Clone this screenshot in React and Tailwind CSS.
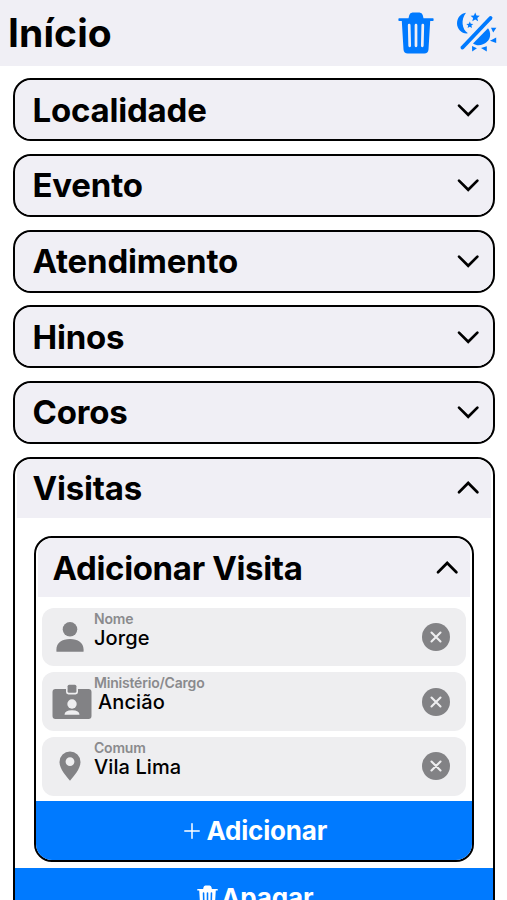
import React from 'react';

const SECTIONS = ['Localidade', 'Evento', 'Atendimento', 'Hinos', 'Coros'];

function TrashIcon({ className }) {
  return (
    <svg viewBox="0 0 36 42" className={className} fill="none">
      <path
        fill="currentColor"
        d="M10.500 6.300L11.300 3Q12 .4 14.500.4h7Q24 .4 24.700 3l.8 3.300H35q.6 0 .6 1v.8q0 1-.6 1h-2.800l-1.700 28.400q-.3 4-4.300 4H9.800q-4 0-4.300-4L3.800 9.100H1q-.6 0-.6-1v-.8q0-1 .6-1z"
      />
      <path stroke="var(--slit)" strokeWidth="2.700" strokeLinecap="round" d="M11.200 13.200l.5 20.600M18 13.200v20.600M24.800 13.200l-.5 20.600" />
    </svg>
  );
}

function ThemeIcon({ className }) {
  return (
    <svg viewBox="0 0 40 42" className={className} fill="currentColor">
      <path d="M9 .8C3 1.500 0 6.500 0 11.500c0 6 5.500 10.800 11 9.800C4.800 17.500 3.600 7.500 9 .8z" />
      <path d="M18.200.5l1.300 3 3.300.3-2.500 2.200.8 3.300-2.900-1.700-2.900 1.700.8-3.300-2.500-2.200 3.300-.3zM12.800 9.400l1 2.300 2.500.2-1.900 1.700.6 2.500-2.200-1.300-2.200 1.300.6-2.500-1.900-1.700 2.500-.2z" />
      <path d="M5.500 35.500L33.500 6" stroke="currentColor" strokeWidth="3.900" strokeLinecap="round" />
      <path d="M31 16.200C34 20 34 26 30 29.800S20 34.500 16 31.500z" />
      <path d="M34 15.700h5.400l-3.200 4.900zM33 28.700l6.200-3.200v5.400zM24 36l5.800-1.700v5.200zM15 34l4.900 2.300-4.700 3.100z" />
    </svg>
  );
}

function Chevron({ up }) {
  return (
    <svg viewBox="0 0 24 16" className="w-6 h-4" fill="none" stroke="black" strokeWidth="2.700" strokeLinecap="round" strokeLinejoin="miter">
      <path d={up ? 'M3 12.200L12.200 3l9.200 9.200' : 'M3 3.600l9.200 9.200 9.200-9.200'} />
    </svg>
  );
}

function PersonIcon() {
  return (
    <svg viewBox="0 0 28 32" className="w-7 h-8 ml-[14px]" fill="#828285">
      <circle cx="14" cy="8.300" r="7.300" />
      <path d="M.4 30.200v-1.700C.4 22 6 18 14 18s13.600 4 13.600 10.500v1.700q0 .6-.6.6H1q-.6 0-.6-.6z" />
    </svg>
  );
}

function BadgeIcon() {
  return (
    <svg viewBox="0 0 40 36" className="w-10 h-9 ml-[10px]" fill="#828285">
      <path d="M3.500 5H14V8q0 2.400 2.400 2.400h7.200Q26 10.400 26 8V5h10.500q3 0 3 3v24q0 3-3 3h-33q-3 0-3-3V8q0-3 3-3z" />
      <rect x="15.600" y=".8" width="8.800" height="8" rx="1.500" />
      <g fill="#eeeef0">
        <circle cx="20" cy="20" r="4.700" />
        <path d="M12.500 30.700q0-4.500 7.500-4.500t7.500 4.500z" />
      </g>
    </svg>
  );
}

function PinIcon() {
  return (
    <svg viewBox="0 0 22 30" className="w-[22px] h-[30px] ml-[17px]" fill="#828285">
      <path fillRule="evenodd" d="M11 .4a10.500 10.500 0 0 1 10.500 10.500C21.500 18 14.500 25.500 11 29.800 7.500 25.500.5 18 .5 10.900A10.500 10.500 0 0 1 11 .4zm0 5.800a4.400 4.400 0 1 0 0 8.800 4.400 4.400 0 0 0 0-8.800z" />
    </svg>
  );
}

function SectionHeader({ title, open, nested }) {
  return (
    <div className="mx-[2px] flex h-[59px] items-center justify-between rounded-t-[14px] bg-[#f0eff5] pl-[15.500px] pr-[11px]">
      <h2 className={`text-[33px] leading-[34px] font-bold whitespace-nowrap ${nested ? '-ml-[1px] tracking-[-0.35px]' : 'tracking-[-0.2px]'}`}>
        {title}
      </h2>
      <Chevron up={open} />
    </div>
  );
}

function Field({ icon, label, value, indent }) {
  return (
    <div className="flex h-[58.500px] items-center rounded-xl bg-[#eeeef0] pr-[16px]">
      <div className="w-[52px] shrink-0">{icon}</div>
      <div className="flex-1 self-start pt-[3px]">
        <div className="text-[14px] leading-[16px] font-semibold tracking-[-0.2px] text-[#8a8a8d]">{label}</div>
        <div className={`text-[20px] leading-[22px] font-medium tracking-[0.1px] ${indent ? 'pl-[4px]' : ''}`}>{value}</div>
      </div>
      <svg viewBox="0 0 28 28" className="w-7 h-7">
        <circle cx="14" cy="14" r="14" fill="#828285" />
        <path d="M9.500 9.500l9 9M18.500 9.500l-9 9" stroke="#eeeef0" strokeWidth="2.100" strokeLinecap="round" />
      </svg>
    </div>
  );
}

export default function App() {
  return (
    <div className="h-[900px] w-[507px] overflow-hidden bg-white font-['Inter','Liberation_Sans',sans-serif] text-black">
      <header className="flex h-[66px] items-center justify-between bg-[#f0eff5] pl-[8px] pr-[10.500px]">
        <h1 className="-mt-[2px] text-[39px] leading-none font-bold tracking-[0.1px]">Início</h1>
        <div className="flex items-center gap-[23px] text-[#007aff]">
          <TrashIcon className="w-9 h-[42px] [--slit:#f0eff5]" />
          <ThemeIcon className="w-10 h-[42px]" />
        </div>
      </header>

      <main className="flex flex-col gap-[12.500px] pl-[13px] pr-[12.500px] pt-[12.200px]">
        {SECTIONS.map((title) => (
          <section key={title} className="h-[63.200px] shrink-0 overflow-hidden rounded-[18px] border-2 border-black bg-[#f0eff5]">
            <SectionHeader title={title} />
          </section>
        ))}

        <section className="h-[600px] shrink-0 overflow-hidden rounded-t-[18px] border-2 border-black">
          <SectionHeader title="Visitas" open />

          <div className="mx-[19px] mt-[18.500px] h-[325.500px] overflow-hidden rounded-[18px] border-2 border-black">
            <SectionHeader title="Adicionar Visita" open nested />
            <div className="flex flex-col gap-[6.300px] px-[6px] pt-[10.500px] pb-[5px]">
              <Field icon={<PersonIcon />} label="Nome" value="Jorge" />
              <Field icon={<BadgeIcon />} label="Ministério/Cargo" value="Ancião" indent />
              <Field icon={<PinIcon />} label="Comum" value="Vila Lima" />
            </div>
            <button className="flex h-[60px] w-full items-center justify-center gap-[6px] bg-[#007aff] pl-[4px] text-[26px] font-bold tracking-[-0.2px] text-white">
              <svg viewBox="0 0 16 16" className="w-4 h-4" stroke="white" strokeWidth="1.500" strokeLinecap="round">
                <path d="M8 .8v14.400M.8 8h14.400" />
              </svg>
              Adicionar
            </button>
          </div>

          <button className="mt-[6px] flex h-[60px] w-full items-center justify-center gap-[3px] bg-[#007aff] pl-[3px] text-[26px] font-bold tracking-[-0.1px] text-white">
            <TrashIcon className="w-[21px] h-[25px] [--slit:#007aff]" />
            Apagar
          </button>
        </section>
      </main>
    </div>
  );
}
